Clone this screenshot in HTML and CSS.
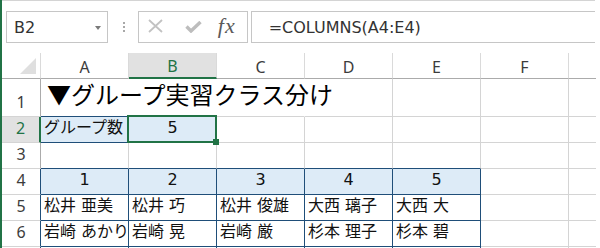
FILE: index.html
```html
<!DOCTYPE html>
<html lang="ja">
<head>
    <meta charset="UTF-8">
    <title>グループ実習クラス分け</title>
    <link rel="stylesheet" href="styles.css">
</head>
<body>
    <div class="app">
        <div class="toolbar">
            <div class="namebox"><span>B2</span><span class="caret"></span></div>
            <div class="grip"><i></i><i></i><i></i></div>
            <div class="fxbox">
                <svg class="icon-x" width="15" height="14" viewBox="0 0 15 14">
                    <path d="M1 1 L14 13 M14 1 L1 13" stroke="#c2c2c2" stroke-width="1.8" fill="none"/>
                </svg>
                <svg class="icon-ok" width="17" height="12" viewBox="0 0 17 12">
                    <path d="M1.5 5.5 L6 10 L15.5 1" stroke="#bdbdbd" stroke-width="3.4" fill="none"/>
                </svg>
                <span class="fx">fx</span>
            </div>
            <div class="formula">=COLUMNS(A4:E4)</div>
        </div>

        <div class="sheet">
            <div class="corner"><span class="tri"></span></div>
            <div class="colhead">A</div>
            <div class="colhead sel">B</div>
            <div class="colhead">C</div>
            <div class="colhead">D</div>
            <div class="colhead">E</div>
            <div class="colhead">F</div>
            <div class="colhead last"></div>

            <div class="rowhead">1</div>
            <div class="cell title above open">▼グループ実習クラス分け</div>
            <div class="cell above open"></div>
            <div class="cell open"></div>
            <div class="cell"></div>
            <div class="cell"></div>
            <div class="cell"></div>
            <div class="cell last"></div>

            <div class="rowhead sel">2</div>
            <div class="cell blue fill">グループ数</div>
            <div class="cell blue fill num active">5</div>
            <div class="cell"></div>
            <div class="cell"></div>
            <div class="cell"></div>
            <div class="cell"></div>
            <div class="cell last"></div>

            <div class="rowhead">3</div>
            <div class="cell above"></div>
            <div class="cell above"></div>
            <div class="cell above"></div>
            <div class="cell above"></div>
            <div class="cell above"></div>
            <div class="cell"></div>
            <div class="cell last"></div>

            <div class="rowhead edge">4</div>
            <div class="cell blue fill num">1</div>
            <div class="cell blue fill num">2</div>
            <div class="cell blue fill num">3</div>
            <div class="cell blue fill num">4</div>
            <div class="cell blue fill num">5</div>
            <div class="cell"></div>
            <div class="cell last"></div>

            <div class="rowhead edge">5</div>
            <div class="cell blue">松井 亜美</div>
            <div class="cell blue">松井 巧</div>
            <div class="cell blue">松井 俊雄</div>
            <div class="cell blue">大西 璃子</div>
            <div class="cell blue">大西 大</div>
            <div class="cell"></div>
            <div class="cell last"></div>

            <div class="rowhead edge">6</div>
            <div class="cell blue">岩崎 あかり</div>
            <div class="cell blue">岩崎 晃</div>
            <div class="cell blue">岩崎 厳</div>
            <div class="cell blue">杉本 理子</div>
            <div class="cell blue">杉本 碧</div>
            <div class="cell"></div>
            <div class="cell last"></div>

            <div class="rowhead edge"></div>
            <div class="cell blue"></div>
            <div class="cell blue"></div>
            <div class="cell blue"></div>
            <div class="cell blue"></div>
            <div class="cell blue"></div>
            <div class="cell"></div>
            <div class="cell last"></div>
        </div>
    </div>
</body>
</html>
```

FILE: styles.css
```css
* {
    box-sizing: border-box;
}
body {
    margin: 0;
    overflow: hidden;
    background: #fff;
}
.app {
    width: 600px;
    height: 248px;
    border-left: 2px solid #217346;
    overflow: hidden;
}

/* formula bar */
.toolbar {
    width: 593px;
    height: 53px;
    display: flex;
    align-items: center;
    padding: 10px 0 10px 4px;
    border-top: 1px solid #d4d4d4;
}
.namebox {
    width: 102px;
    height: 32px;
    display: flex;
    align-items: center;
    justify-content: space-between;
    padding: 0 6px 0 7px;
    border: 1px solid #c6c6c6;
    font: 16px "DejaVu Sans", sans-serif;
    color: #333;
}
.caret {
    width: 0;
    height: 0;
    margin-top: 1px;
    border-left: 3px solid transparent;
    border-right: 3px solid transparent;
    border-top: 4px solid #7a7a7a;
}
.grip {
    display: flex;
    flex-direction: column;
    gap: 2px;
    margin: 0 13px 0 15px;
}
.grip i {
    width: 2px;
    height: 2px;
    background: #a8a8a8;
}
.fxbox {
    width: 110px;
    height: 32px;
    display: flex;
    align-items: center;
    border: 1px solid #c6c6c6;
}
.icon-x {
    margin: 0 0 3px 9px;
}
.icon-ok {
    margin: 0 0 1px 22px;
}
.fx {
    margin: 0 0 2px 16px;
    font: italic 22px "Liberation Serif", serif;
    letter-spacing: 1px;
    color: #5a5a5a;
}
.formula {
    width: 345px;
    height: 32px;
    margin-left: 3px;
    display: flex;
    align-items: center;
    padding-left: 17px;
    border: 1px solid #c6c6c6;
    border-right: none;
    font: 16px "DejaVu Sans", sans-serif;
    color: #333;
}

/* grid */
.sheet {
    display: grid;
    grid-template-columns: 39px repeat(6, 88px) 27px;
    grid-template-rows: 26px 38px repeat(6, 26px);
}
.corner,
.colhead {
    border-right: 1px solid #dadada;
    border-bottom: 1px solid #ababab;
}
.corner {
    display: flex;
    justify-content: flex-end;
    align-items: flex-end;
    padding: 0 4px 4px 0;
}
.tri {
    width: 0;
    height: 0;
    border-left: 16px solid transparent;
    border-bottom: 16px solid #dfdfdf;
}
.colhead {
    display: flex;
    justify-content: center;
    align-items: center;
    padding-top: 2px;
    font: 16px "Noto Sans", sans-serif;
    color: #3c3c3c;
}
.colhead.sel {
    background: #e1e1e1;
    border-bottom: 2px solid #217346;
    color: #217346;
}
.colhead.last,
.cell.last {
    border-right: none;
}
.rowhead {
    display: flex;
    justify-content: center;
    align-items: flex-end;
    padding-bottom: 4px;
    border-right: 1px solid #ababab;
    border-bottom: 1px solid #d4d4d4;
    font: 16px/20px "Noto Sans", sans-serif;
    color: #3c3c3c;
}
.rowhead.sel {
    background: #e1e1e1;
    border-right: 2px solid #217346;
    color: #217346;
}
.rowhead.edge {
    border-right-color: #1f4e79;
}

.cell {
    display: flex;
    align-items: flex-end;
    padding: 0 3px 4px 3px;
    border-right: 1px solid #d4d4d4;
    border-bottom: 1px solid #d4d4d4;
    white-space: nowrap;
    overflow: hidden;
    font: 16px/20px "DejaVu Sans", "Noto Sans CJK JP", sans-serif;
    color: #111;
}
.cell.open {
    border-right-color: transparent;
    overflow: visible;
}
.cell.above {
    border-bottom-color: #1f4e79;
}
.cell.blue {
    border-right-color: #1f4e79;
    border-bottom-color: #1f4e79;
}
.cell.fill {
    background: #ddebf7;
}
.cell.num {
    justify-content: center;
}
.cell.title {
    padding: 0 0 7px 6px;
    font: 24px/30px "Noto Sans CJK JP", sans-serif;
    color: #000;
}
.cell.active {
    position: relative;
    overflow: visible;
}
.cell.active::after {
    content: "";
    position: absolute;
    top: -2px;
    left: -2px;
    right: -1px;
    bottom: -1px;
    border: 2px solid #217346;
}
.cell.active::before {
    content: "";
    position: absolute;
    right: -3px;
    bottom: -3px;
    width: 6px;
    height: 6px;
    background: #217346;
    z-index: 1;
}
```
